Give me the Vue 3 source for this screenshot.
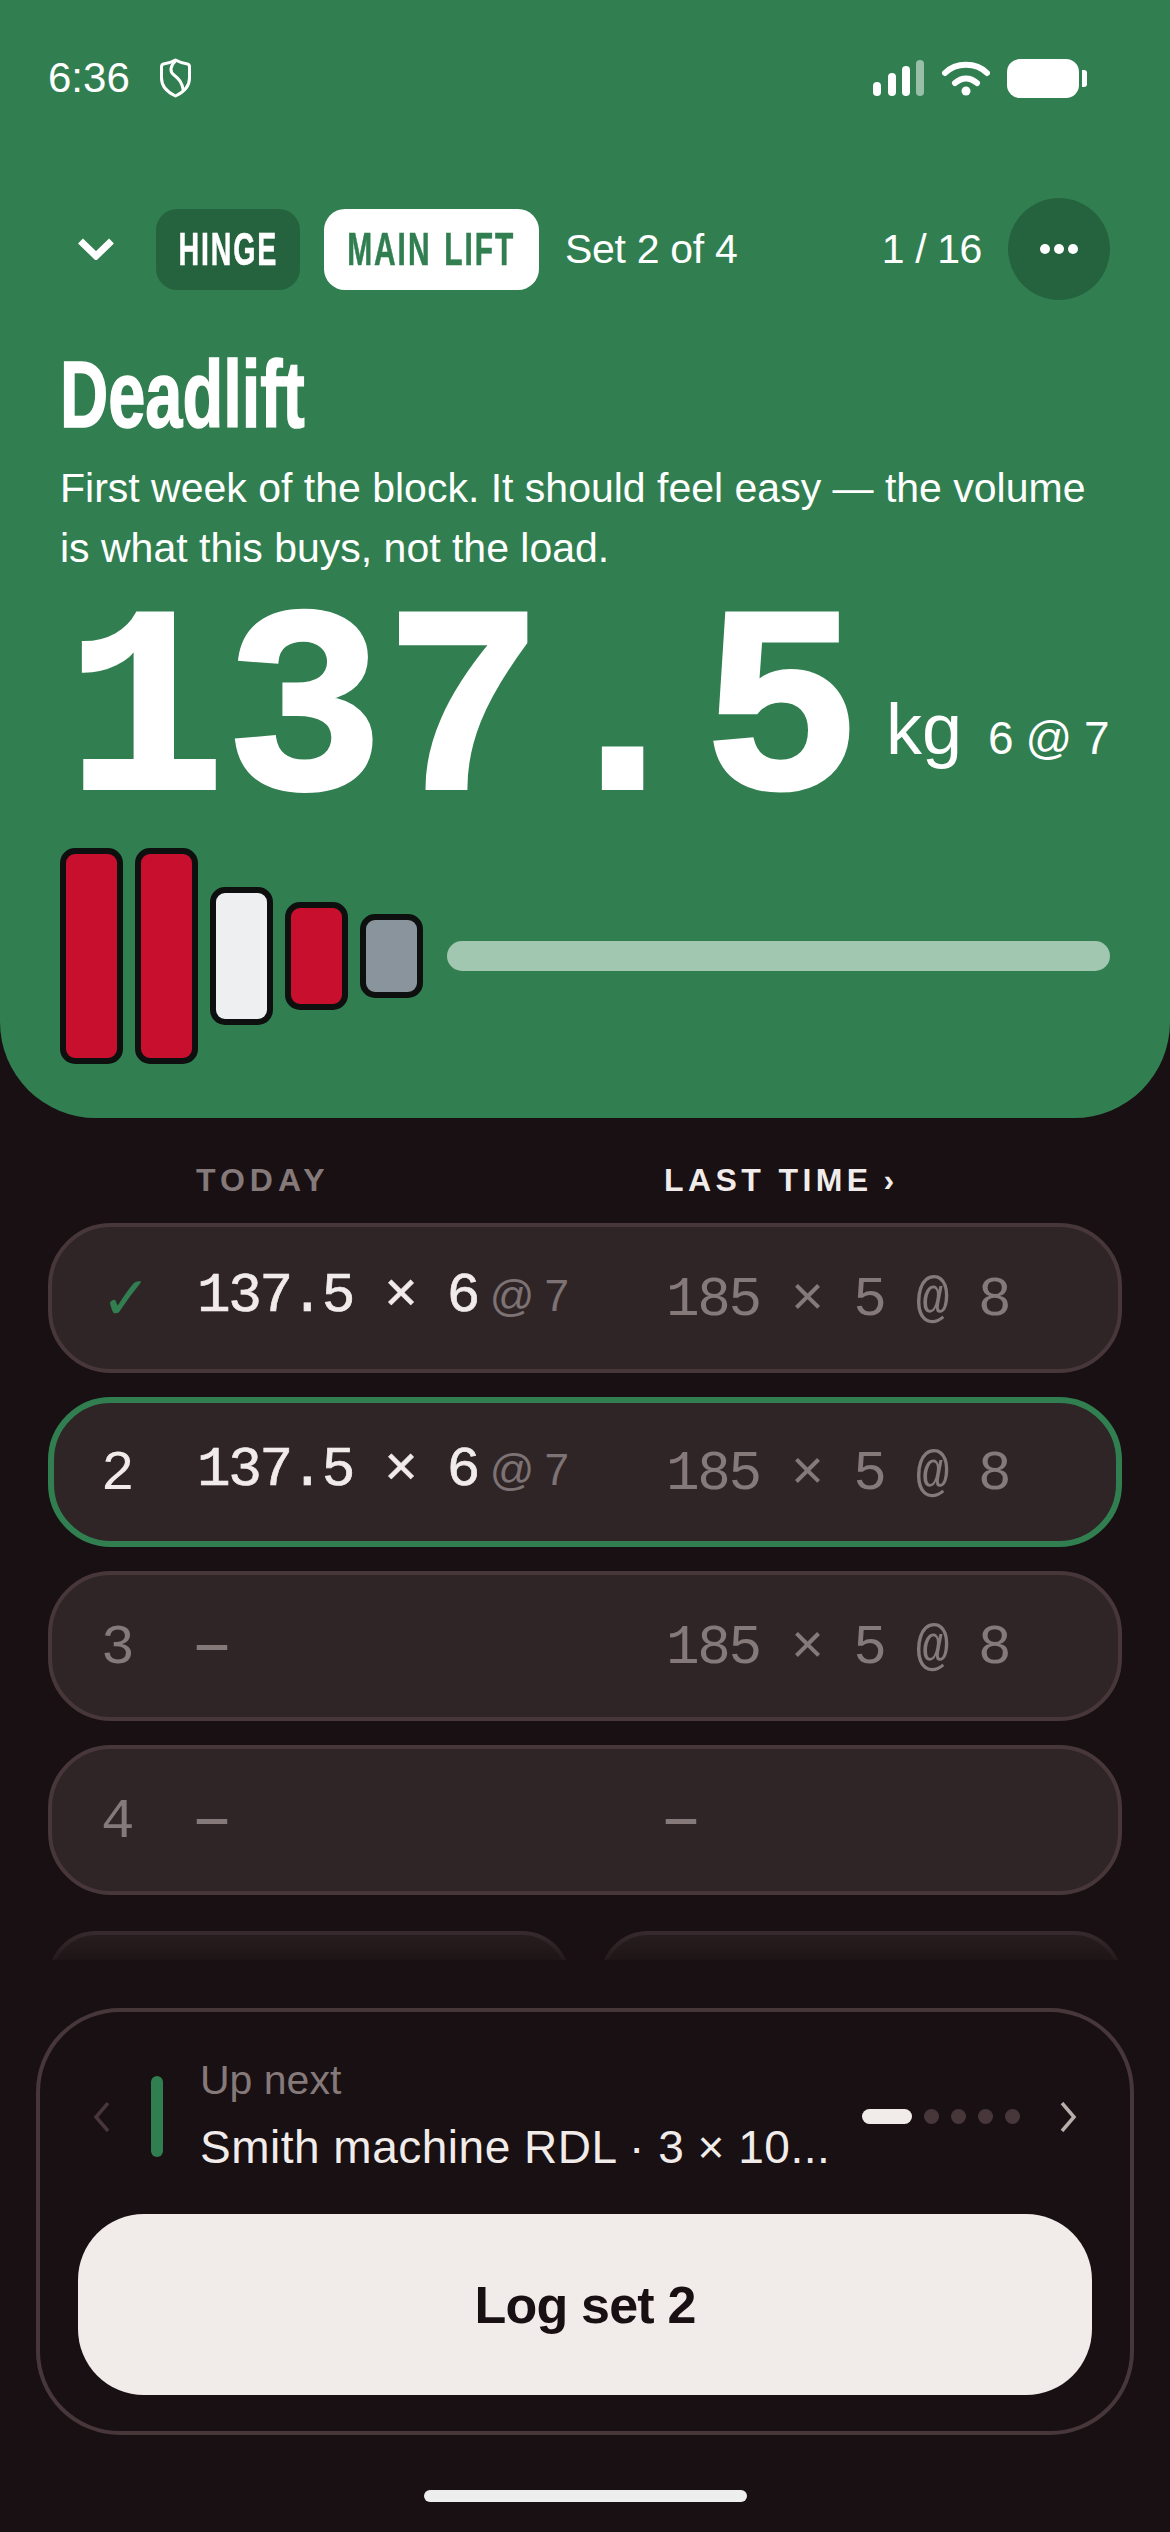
<template>
  <div class="screen">
    <section class="hero">
      <div class="status">
        <span class="clock">6:36</span>
        <svg class="shield" viewBox="0 0 33 40" fill="none" stroke="#fff" stroke-width="3">
          <path d="M16.5 2 C20 4 25 5.5 28.5 6 C30 6.3 30.5 7.2 30.5 8.8 V20 C30.5 28.5 24 34.5 16.5 38 C9 34.5 2.5 28.5 2.5 20 V8.8 C2.5 7.2 3 6.3 4.5 6 C8 5.5 13 4 16.5 2 Z" stroke-linejoin="round" />
          <path d="M16.5 3 C11 8 10.5 13.5 15 17 C20 21 23 24 24.5 33" />
        </svg>
        <div class="status-right">
          <svg class="signal" width="51" height="36" viewBox="0 0 51 36" fill="#fff">
            <rect x="0" y="22" width="8" height="14" rx="4" />
            <rect x="15" y="13" width="8" height="23" rx="4" />
            <rect x="29" y="6" width="8" height="30" rx="4" />
            <rect x="43" y="0" width="8" height="36" rx="4" opacity="0.5" />
          </svg>
          <svg class="wifi" width="48" height="37" viewBox="0 0 48 37" fill="none" stroke="#fff" stroke-width="6" stroke-linecap="round">
            <path d="M3 13 C14 2 34 2 45 13" />
            <path d="M13 23 C20 17 28 17 35 23" />
            <circle cx="24" cy="31" r="4.5" fill="#fff" stroke="none" />
          </svg>
          <div class="battery"><i class="battery-nub"></i></div>
        </div>
      </div>

      <div class="nav">
        <svg class="collapse" width="36" height="22" viewBox="0 0 36 22" fill="none" stroke="#fff" stroke-width="7">
          <path d="M2.5 3 L18 18 L33.5 3" />
        </svg>
        <span class="pill pill-dark"><b>HINGE</b></span>
        <span class="pill pill-light"><b>MAIN LIFT</b></span>
        <span class="set-label">Set 2 of 4</span>
        <span class="counter">1 / 16</span>
        <button class="more">
          <i></i><i></i><i></i>
        </button>
      </div>

      <h1 class="title"><span>Deadlift</span></h1>
      <p class="note">First week of the block. It should feel easy — the volume<br />is what this buys, not the load.</p>

      <div class="load">
        <span class="weight">137.5</span>
        <div class="load-side">
          <span class="unit">kg</span>
          <span class="target">6 @ 7</span>
        </div>
      </div>

      <div class="bar-row">
        <div class="plates">
          <div
            v-for="(plate, i) in plates"
            :key="i"
            class="plate"
            :class="plate.color"
            :style="{ height: plate.height + 'px' }"
          ></div>
        </div>
        <div class="sleeve"></div>
      </div>
    </section>

    <div class="table-head">
      <span class="head-today">TODAY</span>
      <span class="head-last">LAST TIME<small>›</small></span>
    </div>

    <div class="rows">
      <div v-for="row in rows" :key="row.id" class="row" :class="{ active: row.active }">
        <span class="num" :class="{ done: row.done, current: row.active }">{{ row.done ? '✓' : row.id }}</span>
        <span class="today" :class="{ empty: !row.today }">
          <template v-if="row.today">{{ row.today }}<em>@<u>7</u></em></template>
          <template v-else>—</template>
        </span>
        <span class="last" :class="{ empty: row.last === '—' }">{{ row.last }}</span>
      </div>
    </div>

    <div class="stubs">
      <div class="stub"></div>
      <div class="stub"></div>
    </div>

    <div class="panel">
      <div class="next">
        <svg class="arrow arrow-prev" width="17" height="30" viewBox="0 0 17 30" fill="none" stroke-width="3.5">
          <path d="M15 1 L3 15 L15 29" />
        </svg>
        <i class="accent"></i>
        <div class="next-text">
          <span class="next-label">Up next</span>
          <span class="next-name">Smith machine RDL · 3 × 10...</span>
        </div>
        <div class="pager">
          <i class="on"></i><i></i><i></i><i></i><i></i>
        </div>
        <svg class="arrow arrow-next" width="17" height="30" viewBox="0 0 17 30" fill="none" stroke-width="3.5">
          <path d="M2 1 L14 15 L2 29" />
        </svg>
      </div>
      <button class="log">Log set 2</button>
    </div>

    <div class="home-bar"></div>
  </div>
</template>

<script setup>
const plates = [
  { color: 'red', height: 216 },
  { color: 'red', height: 216 },
  { color: 'white', height: 138 },
  { color: 'red', height: 108 },
  { color: 'grey', height: 84 },
]

const rows = [
  { id: 1, done: true, today: '137.5 × 6', last: '185 × 5 @ 8' },
  { id: 2, active: true, today: '137.5 × 6', last: '185 × 5 @ 8' },
  { id: 3, today: '', last: '185 × 5 @ 8' },
  { id: 4, today: '', last: '—' },
]
</script>

<style>
body {
  margin: 0;
  background: #181012;
}
</style>

<style scoped>
.screen {
  width: 1170px;
  height: 2532px;
  overflow: hidden;
  background: #181012;
  font-family: "Liberation Sans", Arial, sans-serif;
  color: #fff;
}

.hero {
  background: #317f51;
  border-radius: 0 0 96px 96px;
  padding-bottom: 54px;
}

.status {
  display: flex;
  align-items: center;
  height: 40px;
  padding: 58px 91px 0 48px;
}
.clock {
  font-size: 42px;
  line-height: 40px;
  width: 111px;
}
.shield {
  width: 33px;
  height: 40px;
}
.status-right {
  margin-left: auto;
  display: flex;
  align-items: center;
}
.signal {
  margin-right: 18px;
}
.wifi {
  margin-right: 17px;
}
.battery {
  position: relative;
  width: 72px;
  height: 39px;
  border-radius: 13px;
  background: #fff;
}
.battery-nub {
  position: absolute;
  left: 75px;
  top: 11px;
  width: 5px;
  height: 17px;
  border-radius: 0 3px 3px 0;
  background: #fff;
}

.nav {
  display: flex;
  align-items: center;
  height: 102px;
  margin-top: 100px;
  padding: 0 60px 0 78px;
}
.collapse {
  margin-right: 42px;
}
.pill {
  display: flex;
  align-items: center;
  justify-content: center;
  height: 81px;
  border-radius: 21px;
  font-size: 46px;
  letter-spacing: 3px;
}
.pill b {
  display: inline-block;
  white-space: nowrap;
  -webkit-text-stroke: 0.6px currentColor;
  transform: scaleX(0.62);
}
.pill-dark {
  width: 144px;
  background: #25633e;
  color: #fff;
}
.pill-light {
  width: 215px;
  margin-left: 24px;
  background: #fff;
  color: #317f51;
}
.pill-light b {
  word-spacing: 4px;
  transform: scaleX(0.65);
}
.set-label {
  margin-left: 26px;
  font-size: 41px;
  letter-spacing: -0.3px;
}
.counter {
  margin-left: auto;
  font-size: 41px;
  letter-spacing: -0.4px;
}
.more {
  display: flex;
  align-items: center;
  justify-content: center;
  gap: 4px;
  width: 102px;
  height: 102px;
  margin-left: 26px;
  padding: 0;
  border: 0;
  border-radius: 50%;
  background: #25633e;
}
.more i {
  width: 10px;
  height: 10px;
  border-radius: 50%;
  background: #fff;
}

.title {
  margin: 45px 0 0;
  padding-left: 60px;
  font-size: 94px;
  line-height: 100px;
  font-weight: 700;
}
.title span {
  display: inline-block;
  -webkit-text-stroke: 1.5px #fff;
  transform: scaleX(0.71);
  transform-origin: left center;
}
.note {
  margin: 13px 0 0;
  padding-left: 60px;
  font-size: 41px;
  line-height: 60px;
  white-space: nowrap;
}

.load {
  display: flex;
  align-items: flex-start;
  height: 200px;
  margin-top: 46px;
  padding-left: 66px;
}
.weight {
  width: 820px;
  margin-top: -6px;
  font-family: "Liberation Mono", monospace;
  font-weight: 700;
  font-size: 265px;
  line-height: 200px;
  -webkit-text-stroke: 4px #fff;
}
.load-side {
  display: flex;
  align-items: baseline;
  margin-top: 64px;
}
.unit {
  font-size: 72px;
  margin-right: 26px;
}
.target {
  font-size: 46px;
  letter-spacing: -0.5px;
}

.bar-row {
  display: flex;
  align-items: center;
  margin-top: 24px;
  padding: 0 60px;
}
.plates {
  display: flex;
  align-items: center;
  gap: 12px;
}
.plate {
  box-sizing: border-box;
  width: 63px;
  border: 6px solid #0e1010;
  border-radius: 15px;
}
.plate.red {
  background: #c8102e;
}
.plate.white {
  background: #eeeff1;
}
.plate.grey {
  background: #8a949c;
}
.sleeve {
  flex: 1;
  height: 30px;
  margin-left: 24px;
  border-radius: 15px;
  background: #a2c7b0;
}

.table-head {
  display: grid;
  grid-template-columns: 468px 1fr;
  margin-top: 42px;
  padding-left: 196px;
  font-size: 32px;
  line-height: 40px;
  font-weight: 700;
  letter-spacing: 4.4px;
}
.head-today {
  letter-spacing: 5px;
  color: #85797a;
}
.head-last {
  color: #f1ecea;
}
.head-last small {
  margin-left: 11px;
  font-size: 32px;
}

.rows {
  display: flex;
  flex-direction: column;
  gap: 24px;
  margin: 23px 48px 0;
}
.row {
  box-sizing: border-box;
  display: grid;
  grid-template-columns: 96px 469px 1fr;
  align-items: center;
  height: 150px;
  padding-left: 49px;
  border: 4px solid #47373b;
  border-radius: 63px;
  background: #2f2527;
  font-family: "Liberation Mono", monospace;
  font-size: 56px;
  letter-spacing: -2.4px;
  color: #85797a;
}
.row.active {
  border: 6px solid #317f51;
  padding-left: 47px;
}
.num {
  margin-top: 3px;
}
.num.done {
  margin-top: 0;
  font-family: "DejaVu Sans", sans-serif;
  font-size: 60px;
  letter-spacing: 0;
  color: #317f51;
}
.num.current,
.today {
  color: #f1ecea;
}
.today {
  display: block;
  margin-top: -4px;
  -webkit-text-stroke: 0.7px currentColor;
}
.last {
  margin-top: 3px;
}
.today.empty,
.last.empty {
  margin-top: 0;
  color: #85797a;
  font-size: 50px;
  letter-spacing: 0;
  font-weight: 700;
  -webkit-text-stroke: 0;
}
.today em {
  margin-left: 12px;
  font-family: "Liberation Sans", sans-serif;
  font-style: normal;
  font-size: 44px;
  letter-spacing: 0;
  color: #7d7274;
  -webkit-text-stroke: 0;
}
.today u {
  margin-left: 10px;
  text-decoration: none;
}

.stubs {
  display: flex;
  gap: 30px;
  height: 29px;
  margin: 36px 48px 0;
  overflow: hidden;
  -webkit-mask-image: linear-gradient(rgba(0, 0, 0, 0.7), rgba(0, 0, 0, 0.25));
  mask-image: linear-gradient(rgba(0, 0, 0, 0.7), rgba(0, 0, 0, 0.25));
}
.stub {
  box-sizing: border-box;
  flex: 1;
  height: 150px;
  border: 4px solid #47373b;
  border-radius: 48px;
  background: #2f2527;
}

.panel {
  box-sizing: border-box;
  height: 427px;
  margin: 48px 36px 0;
  padding: 38px 38px 36px;
  border: 4px solid #47373b;
  border-radius: 84px;
}
.next {
  display: flex;
  align-items: center;
  height: 127px;
}
.arrow {
  flex: none;
  margin-top: 6px;
}
.arrow-prev {
  margin-left: 15px;
  stroke: #47373b;
}
.arrow-next {
  margin-left: 40px;
  stroke: #b8afad;
}
.accent {
  flex: none;
  width: 12px;
  height: 81px;
  margin: 5px 0 0 41px;
  border-radius: 6px;
  background: #317f51;
}
.next-text {
  flex: none;
  display: flex;
  flex-direction: column;
  width: 628px;
  margin-left: 37px;
}
.next-label {
  font-size: 41px;
  line-height: 60px;
  color: #85797a;
}
.next-name {
  margin-top: 7px;
  font-size: 46px;
  line-height: 60px;
  letter-spacing: 0.5px;
  white-space: nowrap;
  color: #f1ecea;
}
.pager {
  flex: none;
  display: flex;
  gap: 12px;
  margin: 6px 0 0 34px;
}
.pager i {
  width: 15px;
  height: 15px;
  border-radius: 8px;
  background: #47373b;
}
.pager i.on {
  width: 50px;
  background: #f1ecea;
}
.log {
  display: block;
  width: 100%;
  height: 181px;
  margin-top: 37px;
  border: 0;
  border-radius: 66px;
  background: #f1ecea;
  color: #181012;
  font-family: inherit;
  font-size: 52px;
  font-weight: 700;
  letter-spacing: -0.8px;
}

.home-bar {
  width: 323px;
  height: 12px;
  margin: 55px auto 0;
  border-radius: 6px;
  background: #eeeeee;
}
</style>
